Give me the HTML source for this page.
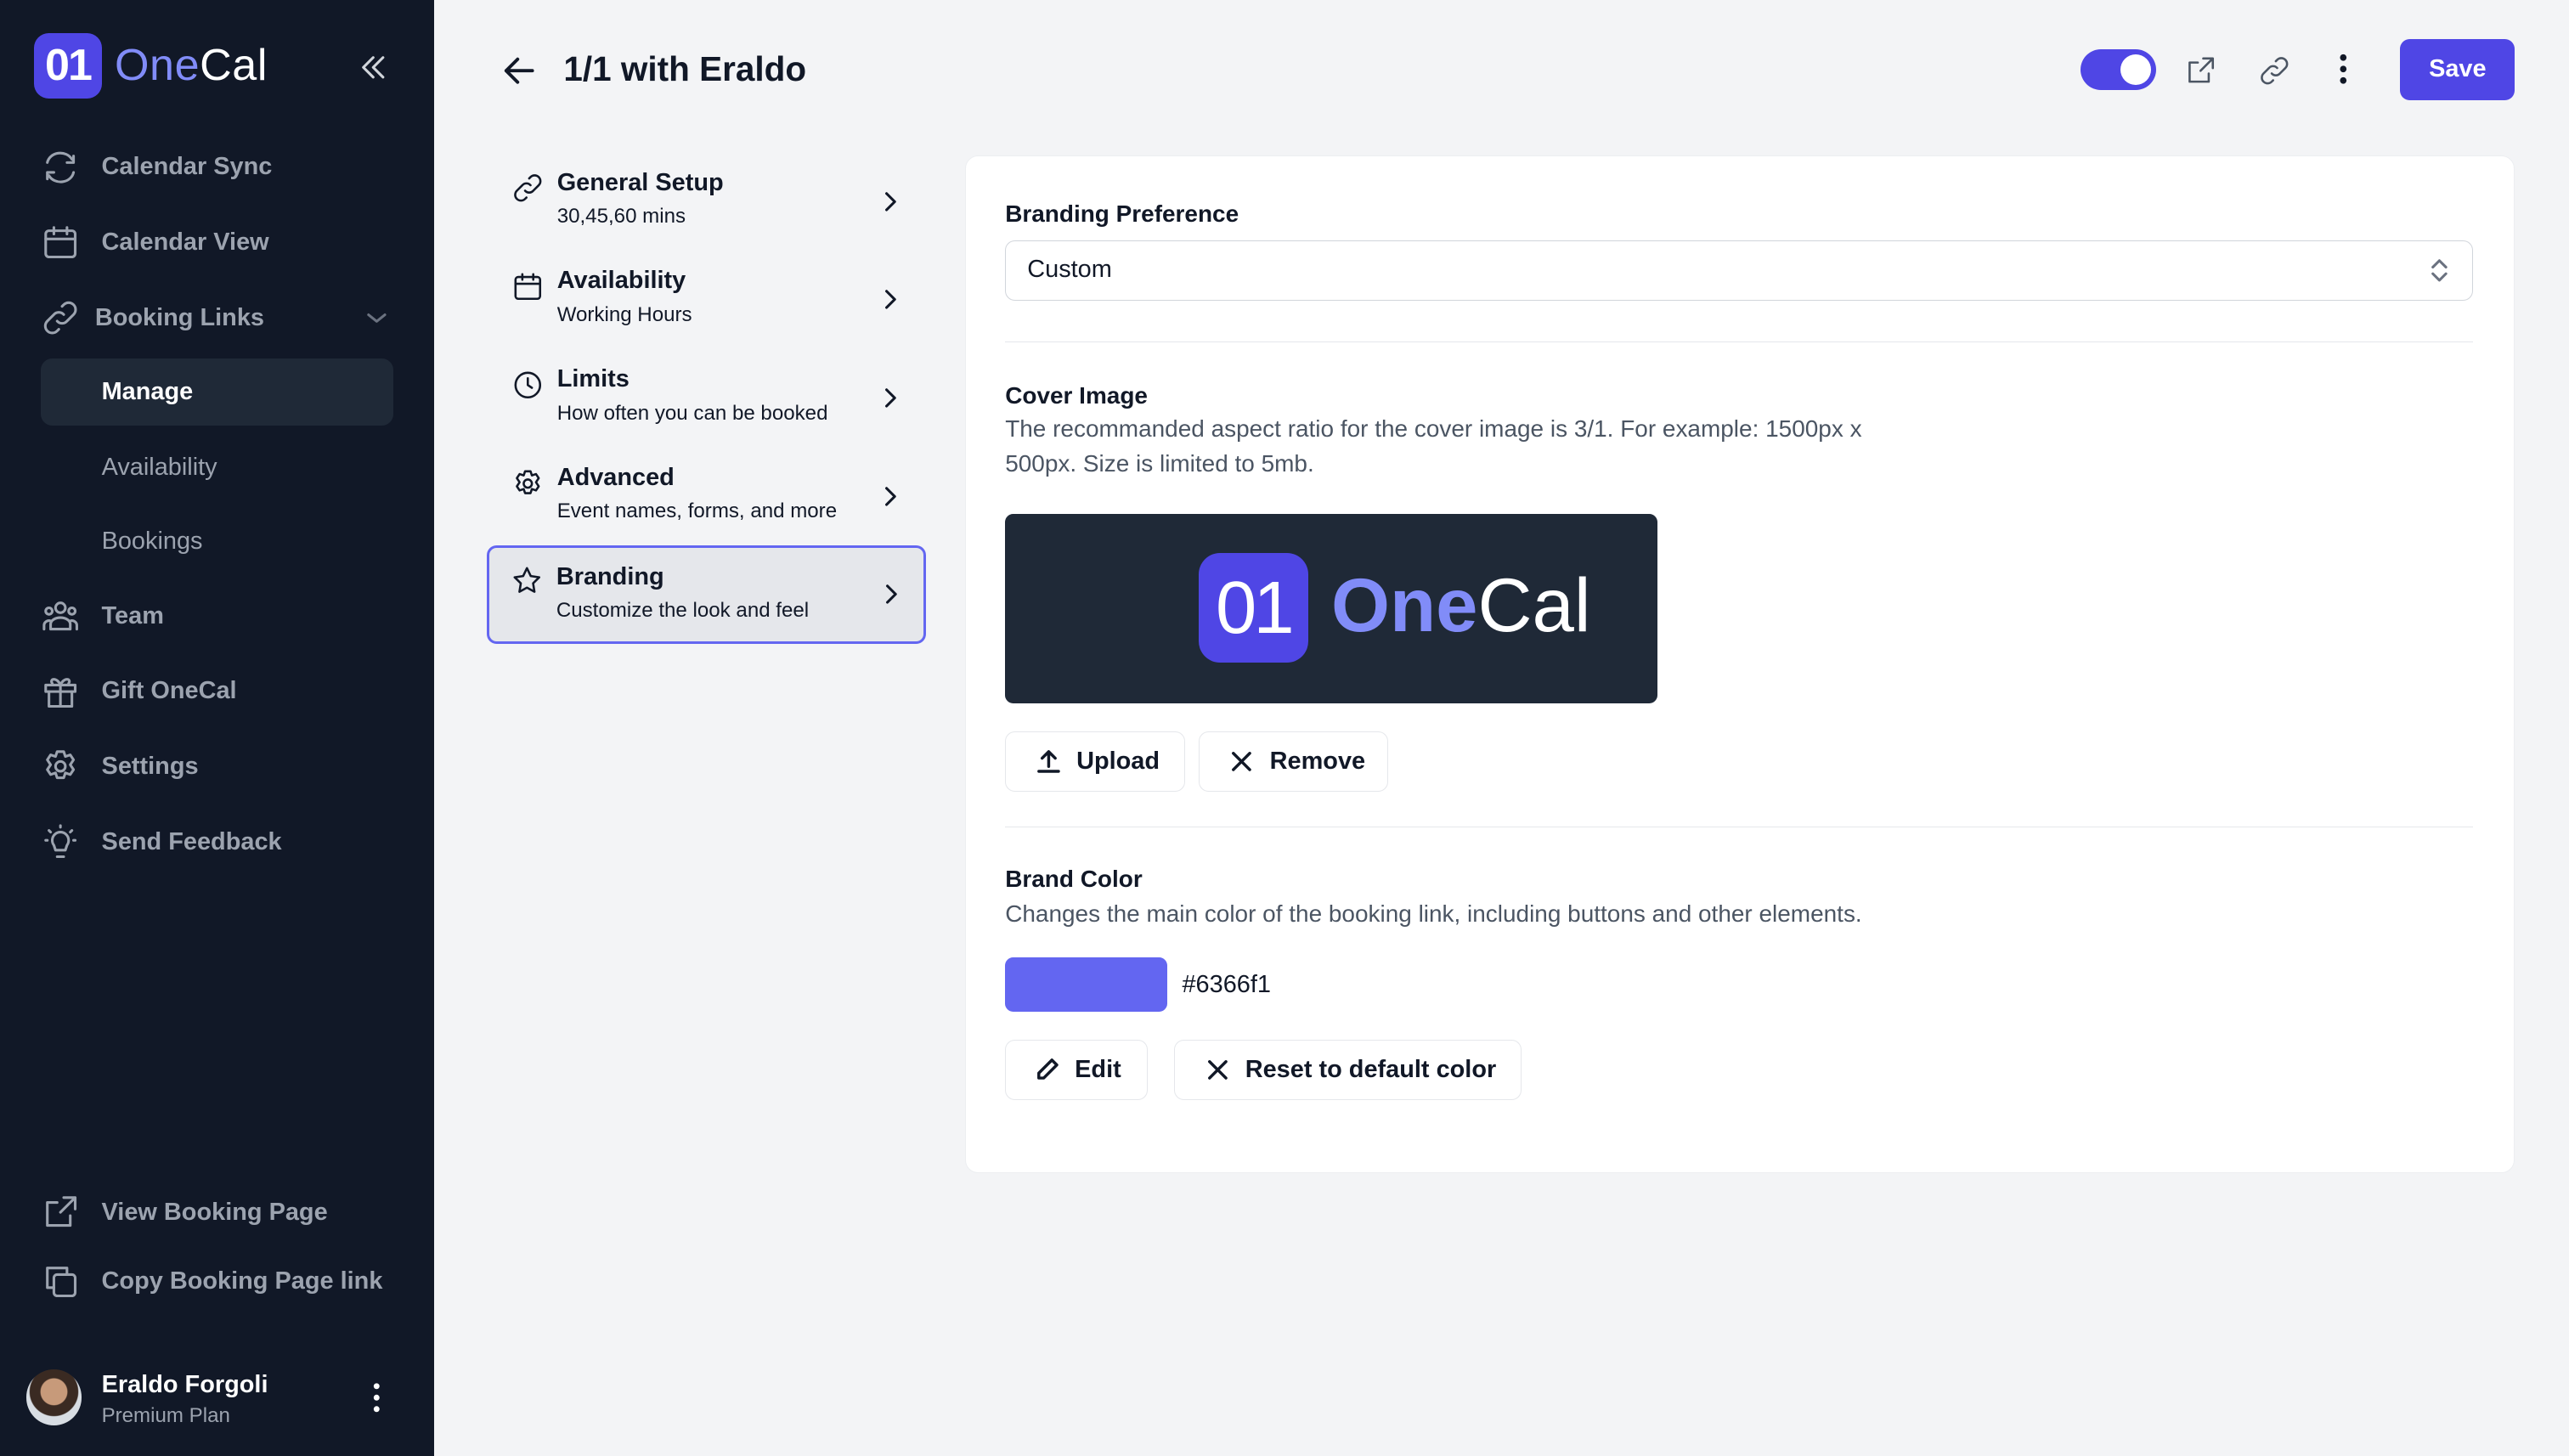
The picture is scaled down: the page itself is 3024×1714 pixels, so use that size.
<!DOCTYPE html>
<html><head><meta charset="utf-8"><style>
html{zoom:1.92857}
*{box-sizing:border-box;margin:0;padding:0}
body{width:1568px;height:889px;overflow:hidden;background:#f3f4f6;font-family:"Liberation Sans",sans-serif;color:#111827;position:relative}
.sb{position:absolute;left:0;top:0;width:265px;height:889px;background:#111827}
.logo{position:absolute;left:21px;top:20px;display:flex;align-items:center}
.lbox{width:41px;height:40px;border-radius:9px;background:#4f46e5;color:#fff;font-size:27px;font-weight:bold;display:flex;align-items:center;justify-content:center;letter-spacing:-1px}
.ltxt{font-size:27px;margin-left:8px;color:#fff;letter-spacing:.3px}
.ltxt b{color:#818cf8;font-weight:normal}
.nav{position:absolute;left:25px;display:flex;align-items:center;color:#9ca3af;font-size:15px;font-weight:bold}
.nav svg{width:24px;height:24px;margin-right:13px}
.sub{position:absolute;left:62px;color:#9ca3af;font-size:15px}
svg{fill:none;stroke:currentColor;stroke-width:1.6;stroke-linecap:round;stroke-linejoin:round}
.main{position:absolute;left:265px;top:0;right:0;bottom:0}
.menu{position:absolute;left:32px;width:268px;height:60px;padding:10px 0 0 43px;font-size:14.5px}
.menu .t{font-weight:bold;font-size:15px;color:#111827}
.menu .d{font-size:12.5px;margin-top:5px;color:#111827}
.menu svg.i{position:absolute;left:15px;top:12px;width:20px;height:20px}
.menu svg.c{position:absolute;right:14px;top:22px;width:16px;height:16px}
.card{position:absolute;left:324px;top:95px;width:946px;height:621px;background:#fff;border-radius:8px;border:1px solid #eceef1}
.h{font-size:14.5px;font-weight:bold;color:#111827}
.p{font-size:14.5px;color:#4b5563;line-height:21px}
.btn{position:absolute;height:37px;border:1px solid #e5e7eb;border-radius:6px;display:flex;align-items:center;padding:0 16px;font-size:15px;font-weight:bold;background:#fff;white-space:nowrap}
.btn svg{width:16px;height:16px;margin-right:9px;stroke-width:1.8;flex:none}
</style></head><body>
<div class="sb">
 <div class="logo"><div class="lbox">01</div><div class="ltxt"><b>One</b>Cal</div></div>
 <svg style="position:absolute;left:218px;top:31px;width:20px;height:20px;color:#d1d5db" viewBox="0 0 20 20"><path d="M10 4l-6 6 6 6M16 4l-6 6 6 6"/></svg>
 <div class="nav" style="top:90px"><svg viewBox="0 0 24 24"><path d="M4 9a8 7 0 0 1 15-2M20 5v4h-4M20 15a8 7 0 0 1-15 2M4 19v-4h4"/></svg>Calendar Sync</div>
 <div class="nav" style="top:136px"><svg viewBox="0 0 24 24"><rect x="3" y="5" width="18" height="16" rx="2"/><path d="M3 10h18M8 3v4M16 3v4"/></svg>Calendar View</div>
 <div class="nav" style="top:182px;left:25px"><svg viewBox="0 0 24 24" style="margin-right:9px"><path d="M10 14a4 4 0 0 0 6 0l4-4a4 4 0 0 0-6-6l-1 1M14 10a4 4 0 0 0-6 0l-4 4a4 4 0 0 0 6 6l1-1"/></svg>Booking Links</div>
 <svg style="position:absolute;left:222px;top:186px;width:16px;height:16px;color:#6b7280" viewBox="0 0 16 16"><path d="M3 6l5 4 5-4"/></svg>
 <div style="position:absolute;left:25px;top:219px;width:215px;height:41px;background:#1f2937;border-radius:7px"></div>
 <div class="sub" style="top:231px;color:#fff;font-weight:bold">Manage</div>
 <div class="sub" style="top:277px">Availability</div>
 <div class="sub" style="top:322px">Bookings</div>
 <div class="nav" style="top:364px"><svg viewBox="0 0 24 24"><circle cx="12" cy="7" r="3"/><circle cx="5" cy="9" r="2"/><circle cx="19" cy="9" r="2"/><path d="M6 20v-3a6 4 0 0 1 12 0v3zM2 20v-2a3 3 0 0 1 4-3M22 20v-2a3 3 0 0 0-4-3"/></svg>Team</div>
 <div class="nav" style="top:410px"><svg viewBox="0 0 24 24"><rect x="3" y="8" width="18" height="4"/><path d="M5 12v9h14v-9M12 8v13M12 8c-2-5-7-4-5-1M12 8c2-5 7-4 5-1"/></svg>Gift OneCal</div>
 <div class="nav" style="top:456px"><svg viewBox="0 0 24 24"><circle cx="12" cy="12" r="3"/><path d="M10 3h4l1 3 3-1 2 3-2 3 2 3-2 3-3-1-1 3h-4l-1-3-3 1-2-3 2-3-2-3 2-3 3 1z"/></svg>Settings</div>
 <div class="nav" style="top:502px"><svg viewBox="0 0 24 24"><path d="M9 17h6M10 21h4M8 14a5 5 0 1 1 8 0l-1 3H9zM12 2v1M3 11h1M20 11h1M5 5l1 1M19 5l-1 1"/></svg>Send Feedback</div>
 <div class="nav" style="top:728px"><svg viewBox="0 0 24 24"><path d="M14 3h7v7M21 3l-9 9M18 14v6H4V6h6"/></svg>View Booking Page</div>
 <div class="nav" style="top:770px"><svg viewBox="0 0 24 24"><rect x="8" y="8" width="13" height="13" rx="2"/><path d="M16 8V4H4v12h4"/></svg>Copy Booking Page link</div>
 <div style="position:absolute;left:16px;top:836px;width:34px;height:34px;border-radius:50%;background:radial-gradient(circle at 50% 40%,#c79a7a 0 30%,#3a2a22 32% 55%,#d8dde3 57%)"></div>
 <div style="position:absolute;left:62px;top:837px;color:#fff;font-size:15px;font-weight:bold">Eraldo Forgoli</div>
 <div style="position:absolute;left:62px;top:857px;color:#9ca3af;font-size:12.5px">Premium Plan</div>
 <svg style="position:absolute;left:220px;top:843px;width:20px;height:20px;color:#fff" viewBox="0 0 20 20"><circle cx="10" cy="3" r="1" fill="#fff"/><circle cx="10" cy="10" r="1" fill="#fff"/><circle cx="10" cy="17" r="1" fill="#fff"/></svg>
</div>
<div class="main">
 <svg style="position:absolute;left:41px;top:32px;width:22px;height:22px;stroke-width:2" viewBox="0 0 22 22"><path d="M19 11H3M10 4l-7 7 7 7"/></svg>
 <div style="position:absolute;left:79px;top:30px;font-size:21px;font-weight:bold">1/1 with Eraldo</div>
 <div style="position:absolute;left:1005px;top:30px;width:46px;height:25px;border-radius:13px;background:#4f46e5"><div style="position:absolute;right:3px;top:3px;width:19px;height:19px;border-radius:50%;background:#fff"></div></div>
 <svg style="position:absolute;left:1068px;top:33px;width:20px;height:20px;color:#4b5563" viewBox="0 0 24 24"><path d="M14 3h7v7M21 3l-9 9M18 14v6H4V6h6"/></svg>
 <svg style="position:absolute;left:1113px;top:33px;width:20px;height:20px;color:#4b5563" viewBox="0 0 24 24"><path d="M10 14a4 4 0 0 0 6 0l4-4a4 4 0 0 0-6-6l-1 1M14 10a4 4 0 0 0-6 0l-4 4a4 4 0 0 0 6 6l1-1"/></svg>
 <svg style="position:absolute;left:1155px;top:32px;width:20px;height:20px" viewBox="0 0 20 20"><circle cx="10" cy="3" r="1.2" fill="#111"/><circle cx="10" cy="10" r="1.2" fill="#111"/><circle cx="10" cy="17" r="1.2" fill="#111"/></svg>
 <div style="position:absolute;left:1200px;top:24px;width:70px;height:37px;background:#4f46e5;border-radius:6px;color:#fff;font-weight:bold;font-size:15px;display:flex;align-items:center;justify-content:center">Save</div>

 <div class="menu" style="top:93px"><svg class="i" viewBox="0 0 24 24"><path d="M10 14a4 4 0 0 0 6 0l4-4a4 4 0 0 0-6-6l-1 1M14 10a4 4 0 0 0-6 0l-4 4a4 4 0 0 0 6 6l1-1"/></svg><div class="t">General Setup</div><div class="d">30,45,60 mins</div><svg class="c" viewBox="0 0 16 16"><path d="M6 3l5 5-5 5"/></svg></div>
 <div class="menu" style="top:153px"><svg class="i" viewBox="0 0 24 24"><rect x="3" y="5" width="18" height="16" rx="2"/><path d="M3 10h18M8 3v4M16 3v4"/></svg><div class="t">Availability</div><div class="d">Working Hours</div><svg class="c" viewBox="0 0 16 16"><path d="M6 3l5 5-5 5"/></svg></div>
 <div class="menu" style="top:213px"><svg class="i" viewBox="0 0 24 24"><circle cx="12" cy="12" r="9"/><path d="M12 7v5l3 2"/></svg><div class="t">Limits</div><div class="d">How often you can be booked</div><svg class="c" viewBox="0 0 16 16"><path d="M6 3l5 5-5 5"/></svg></div>
 <div class="menu" style="top:273px"><svg class="i" viewBox="0 0 24 24"><circle cx="12" cy="12" r="3"/><path d="M10 3h4l1 3 3-1 2 3-2 3 2 3-2 3-3-1-1 3h-4l-1-3-3 1-2-3 2-3-2-3 2-3 3 1z"/></svg><div class="t">Advanced</div><div class="d">Event names, forms, and more</div><svg class="c" viewBox="0 0 16 16"><path d="M6 3l5 5-5 5"/></svg></div>
 <div class="menu" style="top:333px;background:#e5e7eb;border:2px solid #6366f1;border-radius:6px;padding:9px 0 0 41px"><svg class="i" style="left:13px;top:10px" viewBox="0 0 24 24"><path d="M12 3l2.8 5.8 6.2.9-4.5 4.4 1 6.2L12 17.3 6.5 20.3l1-6.2L3 9.7l6.2-.9z"/></svg><div class="t">Branding</div><div class="d">Customize the look and feel</div><svg class="c" style="right:12px;top:20px" viewBox="0 0 16 16"><path d="M6 3l5 5-5 5"/></svg></div>

 <div class="card">
  <div class="h" style="position:absolute;left:24px;top:27px">Branding Preference</div>
  <div style="position:absolute;left:24px;top:51px;width:896px;height:37px;border:1px solid #d1d5db;border-radius:6px;padding:9px 13px;font-size:15px">Custom
   <svg style="position:absolute;right:12px;top:9px;width:16px;height:18px;color:#6b7280" viewBox="0 0 16 18"><path d="M4 7l4-4 4 4M4 11l4 4 4-4"/></svg></div>
  <div style="position:absolute;left:24px;top:113px;width:896px;border-top:1px solid #e5e7eb"></div>
  <div class="h" style="position:absolute;left:24px;top:138px">Cover Image</div>
  <div class="p" style="position:absolute;left:24px;top:156px;width:560px">The recommanded aspect ratio for the cover image is 3/1. For example: 1500px x 500px. Size is limited to 5mb.</div>
  <div style="position:absolute;left:24px;top:218px;width:398px;height:116px;background:#1f2937;border-radius:5px">
   <div style="position:absolute;left:118px;top:24px;width:67px;height:67px;border-radius:13px;background:#4f46e5;color:#fff;font-size:45px;display:flex;align-items:center;justify-content:center;letter-spacing:-2px">01</div>
   <div style="position:absolute;left:199px;top:30px;font-size:46px;color:#fff"><span style="color:#818cf8;font-weight:bold">One</span>Cal</div>
  </div>
  <div class="btn" style="left:24px;top:351px;width:110px;padding-left:18px"><svg viewBox="0 0 16 16"><path d="M8 11V3M4 6l4-4 4 4M2 14h12"/></svg>Upload</div>
  <div class="btn" style="left:142px;top:351px;width:116px;padding-left:18px"><svg viewBox="0 0 16 16"><path d="M3 3l10 10M13 3L3 13"/></svg>Remove</div>
  <div style="position:absolute;left:24px;top:409px;width:896px;border-top:1px solid #e5e7eb"></div>
  <div class="h" style="position:absolute;left:24px;top:433px">Brand Color</div>
  <div class="p" style="position:absolute;left:24px;top:452px">Changes the main color of the booking link, including buttons and other elements.</div>
  <div style="position:absolute;left:24px;top:489px;width:99px;height:33px;background:#6366f1;border-radius:5px"></div>
  <div style="position:absolute;left:132px;top:497px;font-size:15px">#6366f1</div>
  <div class="btn" style="left:24px;top:539px;width:87px;padding-left:17px"><svg viewBox="0 0 16 16"><path d="M11 2l3 3-8 8H3v-3z"/></svg>Edit</div>
  <div class="btn" style="left:127px;top:539px;width:212px;padding-left:18px"><svg viewBox="0 0 16 16"><path d="M3 3l10 10M13 3L3 13"/></svg>Reset to default color</div>
 </div>
</div>
</body></html>
